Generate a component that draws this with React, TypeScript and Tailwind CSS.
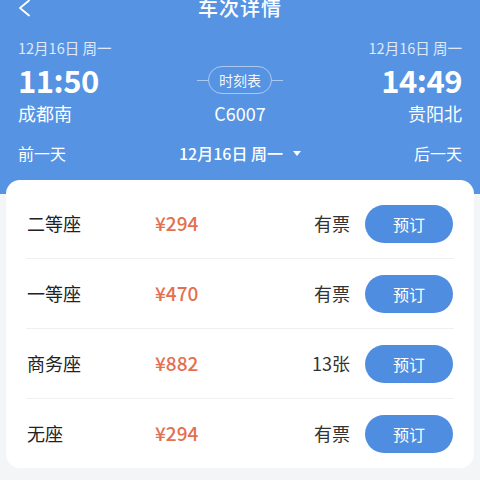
import React from "react";

const SEATS = [
  { name: "二等座", price: "¥294", stock: "有票" },
  { name: "一等座", price: "¥470", stock: "有票" },
  { name: "商务座", price: "¥882", stock: "13张" },
  { name: "无座", price: "¥294", stock: "有票" },
];

const FONT = { fontFamily: '"Noto Sans CJK SC", "Noto Sans", sans-serif' };

export default function App() {
  return (
    <div className="w-[480px] h-[480px] overflow-hidden bg-[#f4f5f7]" style={FONT}>
      {/* Header */}
      <div className="bg-[#5693e2] px-[18px] pb-[30px] text-white">
        <div className="grid grid-cols-[1fr_auto_1fr] items-center h-[30px] -mt-[7px]">
          <svg width="14" height="18" viewBox="0 0 14 18" className="mt-[-1px]">
            <path d="M11 1.5 L2 9 L11 16.5" fill="none" stroke="white" strokeWidth="1.8" strokeLinecap="round" strokeLinejoin="round" />
          </svg>
          <div className="text-[20px] font-medium leading-[30px] tracking-[1px]">车次详情</div>
          <div />
        </div>

        <div className="flex justify-between mt-[16px] h-[18px] text-[14.5px] leading-[18px] text-white/80">
          <span>12月16日 周一</span>
          <span>12月16日 周一</span>
        </div>

        <div className="grid grid-cols-[1fr_auto_1fr] items-center mt-[3px] h-[40px]">
          <span className="text-[31px] leading-[40px] font-semibold tracking-[-0.5px]">11:50</span>
          <div className="flex items-center">
            <div className="w-[11px] h-px bg-white/50" />
            <div className="w-[64px] h-[28px] rounded-full border border-white/50 flex items-center justify-center text-[14px] text-white/95">
              时刻表
            </div>
            <div className="w-[11px] h-px bg-white/50" />
          </div>
          <span className="text-right text-[31px] leading-[40px] font-semibold tracking-[-0.5px]">14:49</span>
        </div>

        <div className="grid grid-cols-[1fr_auto_1fr] items-center h-[26px] text-[18px] leading-[26px]">
          <span>成都南</span>
          <span className="text-center">C6007</span>
          <span className="text-right">贵阳北</span>
        </div>

        <div className="grid grid-cols-[1fr_auto_1fr] items-center mt-[16px] h-[22px] text-[16px] leading-[22px]">
          <span>前一天</span>
          <span className="flex items-center font-medium">
            12月16日 周一
            <svg width="8" height="5" viewBox="0 0 8 5" className="ml-[10px]">
              <path d="M0 0 H8 L4 5 Z" fill="white" />
            </svg>
          </span>
          <span className="text-right">后一天</span>
        </div>
      </div>

      {/* Seat card */}
      <div className="-mt-[14px] mx-[6px] bg-white rounded-[14px] pt-[9px]">
        {SEATS.map((s, i) => (
          <div key={s.name}>
            {i > 0 && <div className="mx-[20px] h-px bg-[#f0f0f2]" />}
            <div className="flex items-center h-[69px] pl-[21px] pr-[21px]">
              <span className="w-[128px] text-[18px] text-[#222]">{s.name}</span>
              <span className="flex-1 text-[19px] font-medium text-[#e3704f]">{s.price}</span>
              <span className="text-[18px] text-[#333]">{s.stock}</span>
              <button className="ml-[15px] w-[88px] h-[38px] rounded-full bg-[#4e8de0] text-white text-[16px]">
                预订
              </button>
            </div>
          </div>
        ))}
      </div>
    </div>
  );
}
